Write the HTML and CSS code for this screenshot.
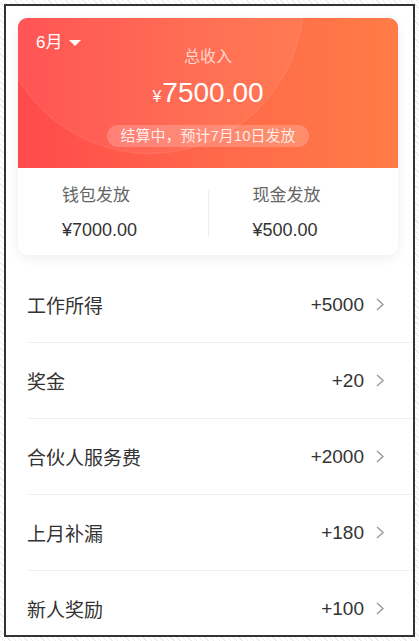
FILE: index.html
```html
<!DOCTYPE html>
<html lang="zh-CN">
<head>
  <meta charset="UTF-8" />
  <meta name="viewport" content="width=device-width, initial-scale=1.0" />
  <title>收入明细</title>
  <link rel="stylesheet" href="styles.css">
</head>
<body>
  <div class="frame">
    <div class="summary">
      <div class="summary-top">
        <div class="glow"></div>
        <div class="month">6月 <span class="caret"></span></div>
        <div class="total-label">总收入</div>
        <div class="total"><span class="yen">¥</span>7500.00</div>
        <div class="pill">结算中，预计7月10日发放</div>
      </div>
      <div class="summary-bottom">
        <div class="split">
          <div class="split-label">钱包发放</div>
          <div class="split-value">¥7000.00</div>
        </div>
        <div class="split-divider"></div>
        <div class="split">
          <div class="split-label">现金发放</div>
          <div class="split-value">¥500.00</div>
        </div>
      </div>
    </div>

    <ul class="income-list">
      <li><span class="name">工作所得</span><span class="amount">+5000</span><svg class="chev" viewBox="0 0 8 13"><path d="M1 1 L7 6.5 L1 12" /></svg></li>
      <li><span class="name">奖金</span><span class="amount">+20</span><svg class="chev" viewBox="0 0 8 13"><path d="M1 1 L7 6.5 L1 12" /></svg></li>
      <li><span class="name">合伙人服务费</span><span class="amount">+2000</span><svg class="chev" viewBox="0 0 8 13"><path d="M1 1 L7 6.5 L1 12" /></svg></li>
      <li><span class="name">上月补漏</span><span class="amount">+180</span><svg class="chev" viewBox="0 0 8 13"><path d="M1 1 L7 6.5 L1 12" /></svg></li>
      <li><span class="name">新人奖励</span><span class="amount">+100</span><svg class="chev" viewBox="0 0 8 13"><path d="M1 1 L7 6.5 L1 12" /></svg></li>
    </ul>
  </div>
</body>
</html>
```

FILE: styles.css
```css
body {
  margin: 0;
  font-family: 'Liberation Sans', 'Noto Sans CJK SC', sans-serif;
  background: repeating-linear-gradient(45deg, #fff 0, #fff 3px, #ececec 3px, #ececec 4px);
}
.frame {
  margin: 4px;
  width: 407px;
  height: 629px;
  border: 2px solid #333;
  background: #fff;
  overflow: hidden;
}
.summary {
  margin: 12px 0 0 12px;
  width: 380px;
  border-radius: 9px;
  background: #fff;
  box-shadow: 0 3px 12px rgba(0,0,0,0.07);
  overflow: hidden;
}
.summary-top {
  position: relative;
  overflow: hidden;
  height: 150px;
  box-sizing: border-box;
  padding-top: 29px;
  background: linear-gradient(90deg, #ff4a4b 0%, #ff6a4a 55%, #ff7c46 100%);
  color: #fff;
  text-align: center;
}
.glow {
  position: absolute;
  left: -22px;
  top: -172px;
  width: 306px;
  height: 306px;
  border-radius: 50%;
  background: rgba(255,255,255,0.06);
  border: 1px solid rgba(255,255,255,0.08);
}
.month {
  position: absolute;
  left: 18px;
  top: 14px;
  font-size: 17px;
  line-height: 22px;
  display: flex;
  align-items: center;
}
.caret {
  margin-left: 7px;
  width: 0;
  height: 0;
  border-left: 6px solid transparent;
  border-right: 6px solid transparent;
  border-top: 6px solid #fff;
}
.total-label {
  position: relative;
  font-size: 16px;
  line-height: 20px;
  color: rgba(255,255,255,0.72);
}
.total {
  position: relative;
  margin-top: 8px;
  font-size: 28px;
  line-height: 36px;
  font-weight: 500;
}
.yen {
  font-size: 16px;
  margin-right: 1px;
}
.pill {
  position: relative;
  display: inline-block;
  margin-top: 10px;
  padding: 0 13px;
  height: 22px;
  line-height: 22px;
  border-radius: 11px;
  font-size: 15px;
  color: rgba(255,255,255,0.85);
  background: rgba(255,255,255,0.2);
}
.summary-bottom {
  display: flex;
  align-items: center;
  height: 87px;
  box-sizing: border-box;
  padding-top: 4px;
}
.split {
  flex: 1;
  padding-left: 44px;
}
.split-label {
  font-size: 17px;
  line-height: 20px;
  color: #666;
}
.split-value {
  margin-top: 13px;
  font-size: 18px;
  line-height: 22px;
  color: #333;
}
.split-divider {
  width: 1px;
  height: 47px;
  background: #eee;
}
.income-list {
  list-style: none;
  margin: 12px 0 0;
  padding: 0 0 0 21px;
}
.income-list li {
  display: flex;
  align-items: center;
  height: 75px;
  padding-right: 29px;
  border-bottom: 1px solid #f0f0f0;
  font-size: 19px;
  color: #333;
}
.income-list .name {
  flex: 1;
}
.chev {
  width: 8px;
  height: 13px;
  margin-left: 12px;
  fill: none;
  stroke: #999;
  stroke-width: 1.4;
}
```
